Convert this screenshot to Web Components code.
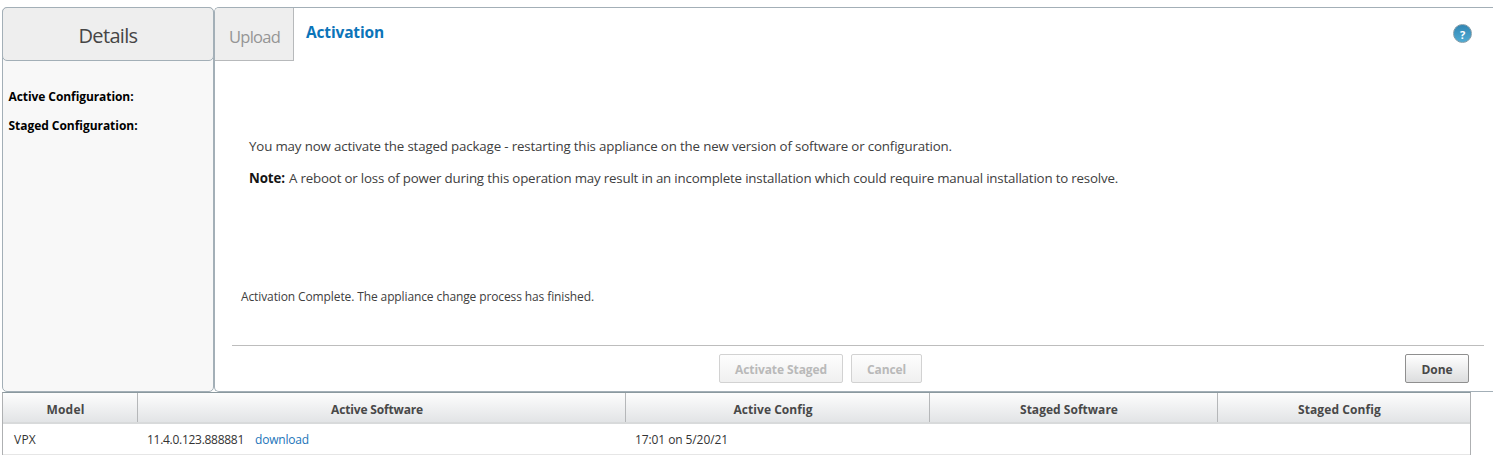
<!DOCTYPE html>
<html lang="en"><head><meta charset="utf-8"><title>Activation</title>
<style>
html,body{margin:0;background:#fff}
body{width:1493px;height:462px;overflow:hidden;font:13.3px/18px "Open Sans","Noto Sans",sans-serif;color:#404040}
</style></head><body>
<activation-page></activation-page>
<script>
const attach=(el,html)=>{el.attachShadow({mode:'open'}).innerHTML=html;};

// A single-line label whose tracking is set so that it spans w pixels.
customElements.define('fit-text',class extends HTMLElement{
  constructor(){super();attach(this,'<style>:host{display:inline-block;white-space:nowrap;flex:none}</style><slot></slot>');}
  connectedCallback(){
    const w=+this.getAttribute('w');
    if(!w)return;
    this.style.letterSpacing='0';
    const n=this.getBoundingClientRect().width;
    this.style.letterSpacing=((w-n)/this.textContent.length).toFixed(3)+'px';
    this.style.width=w+'px';
  }
});

customElements.define('side-panel',class extends HTMLElement{
  constructor(){super();attach(this,`<style>
:host{display:block;box-sizing:border-box;width:212px;height:385px;background:#f8f8f8;border:1px solid #a3afb7;border-radius:5px}
header{box-sizing:border-box;height:54px;margin:-1px;background:#eee;border:1px solid #a3afb7;border-radius:5px;display:flex;justify-content:center;align-items:center;font-size:20px;padding-top:3px;color:#454545}
section{padding:28px 0 0 5.5px;display:flex;flex-direction:column;align-items:flex-start;gap:11px;font-size:12px;font-weight:700;color:#000}
</style><header><slot name="title"></slot></header><section><slot></slot></section>`);}
});

customElements.define('help-icon',class extends HTMLElement{
  constructor(){super();attach(this,`<style>
:host{display:flex;box-sizing:border-box;width:19px;height:19px;border-radius:50%;border:1px solid #819ba8;background:linear-gradient(#3186b4,#50abd3);align-items:center;justify-content:center;color:#fff;font:700 11px/17px "Open Sans",sans-serif}
span{padding-top:2px}
</style><span>?</span>`);}
});

customElements.define('push-button',class extends HTMLElement{
  constructor(){super();attach(this,`<style>
:host{display:block}
button{box-sizing:border-box;width:100%;height:29px;padding:2px 0 0;display:flex;align-items:center;justify-content:center;font:700 12px/18px "Open Sans",sans-serif;color:#484848;border:1px solid #8f8f8f;border-radius:2px;background:linear-gradient(#fff,#dcddde)}
:host([disabled]) button{color:#b9b9b9;border-color:#d2d2d2;background:linear-gradient(#fdfdfd,#f0f0f0)}
</style><button><slot></slot></button>`);}
  connectedCallback(){this.shadowRoot.querySelector('button').disabled=this.hasAttribute('disabled');}
});

customElements.define('wizard-panel',class extends HTMLElement{
  constructor(){super();attach(this,`<style>
:host{display:flex;flex-direction:column;box-sizing:border-box;flex:1;height:385px;background:#fff;border:1px solid #a3afb7;border-right:0;border-radius:5px 0 0 5px;overflow:hidden}
nav{display:flex;align-items:flex-start;height:53px}
.tab{box-sizing:border-box;width:79px;height:53px;background:#eee;border:solid #b7b9bb;border-width:0 1px 1px 0;font-size:16.5px;color:#959595;padding:20px 0 0 14px}
.active{font-size:15.5px;font-weight:700;color:#0b74b9;margin:15px 0 0 12px}
help-icon{margin:16px 21px 0 auto}
.message{padding:76px 0 0 34px}
.message div{height:32px}
.note{display:flex;gap:4px}
b{color:#151515}
.status{padding:87px 0 0 26px;font-size:12px}
footer{box-sizing:border-box;margin:auto 9px 0 17px;height:46px;border-top:1px solid #bdbdbd;padding-top:8px;display:flex}
</style>
<nav><div class="tab"><fit-text w="51">Upload</fit-text></div><fit-text class="active" w="78">Activation</fit-text><help-icon></help-icon></nav>
<div class="message"><div><fit-text w="703">You may now activate the staged package - restarting this appliance on the new version of software or configuration.</fit-text></div>
<div class="note"><b><fit-text w="36">Note:</fit-text></b><fit-text w="829">A reboot or loss of power during this operation may result in an incomplete installation which could require manual installation to resolve.</fit-text></div></div>
<div class="status"><fit-text w="353">Activation Complete. The appliance change process has finished.</fit-text></div>
<footer>
<push-button disabled style="width:124px;margin-left:487px"><fit-text w="92">Activate Staged</fit-text></push-button>
<push-button disabled style="width:71px;margin-left:8px"><fit-text w="39">Cancel</fit-text></push-button>
<push-button style="width:64px;margin:0 15px 0 auto"><fit-text w="31">Done</fit-text></push-button>
</footer>`);}
});

customElements.define('package-table',class extends HTMLElement{
  constructor(){super();attach(this,`<style>
:host{display:block;box-sizing:border-box;width:1469px;height:63px;border:solid #aeb0b2;border-width:1px 1px 0 1px;border-top-color:#8b999f;margin-left:2px}
.row{display:grid;grid-template-columns:135px 488px 304px 288px 252px;box-sizing:border-box}
.head{height:31px;background:linear-gradient(#fdfdfd,#e2e4e6);border-bottom:2px solid #d8dadb;font-weight:700;font-size:12px;color:#484848}
.head div{display:flex;align-items:center;justify-content:center;padding:4px 9px 0 0;border-right:1px solid #b5b7b9}
.head div:last-child{border:0}
.body{height:31px;border-bottom:1px solid #e6e6e6;font-size:12px;color:#333}
.body div{display:flex;align-items:center;padding:1px 0 0 9px;gap:11px}
.body div:first-child{padding-left:11px}
a{color:#2274b9}
</style>
<div class="row head"><div><fit-text w="38">Model</fit-text></div><div><fit-text w="92">Active Software</fit-text></div><div><fit-text w="79">Active Config</fit-text></div><div><fit-text w="98">Staged Software</fit-text></div><div><fit-text w="83">Staged Config</fit-text></div></div>
<div class="row body"><div><fit-text w="22">VPX</fit-text></div><div><fit-text w="97">11.4.0.123.888881</fit-text><a><fit-text w="54">download</fit-text></a></div><div><fit-text w="93">17:01 on 5/20/21</fit-text></div><div></div><div></div></div>`);}
});

customElements.define('activation-page',class extends HTMLElement{
  constructor(){super();attach(this,`<style>
:host{display:block;width:1493px;padding-top:7px}
main{display:flex;padding-left:2px}
</style>
<main><side-panel><fit-text slot="title" w="59">Details</fit-text><fit-text w="125">Active Configuration:</fit-text><fit-text w="129">Staged Configuration:</fit-text></side-panel><wizard-panel></wizard-panel></main>
<package-table></package-table>`);}
});
</script>
</body></html>
